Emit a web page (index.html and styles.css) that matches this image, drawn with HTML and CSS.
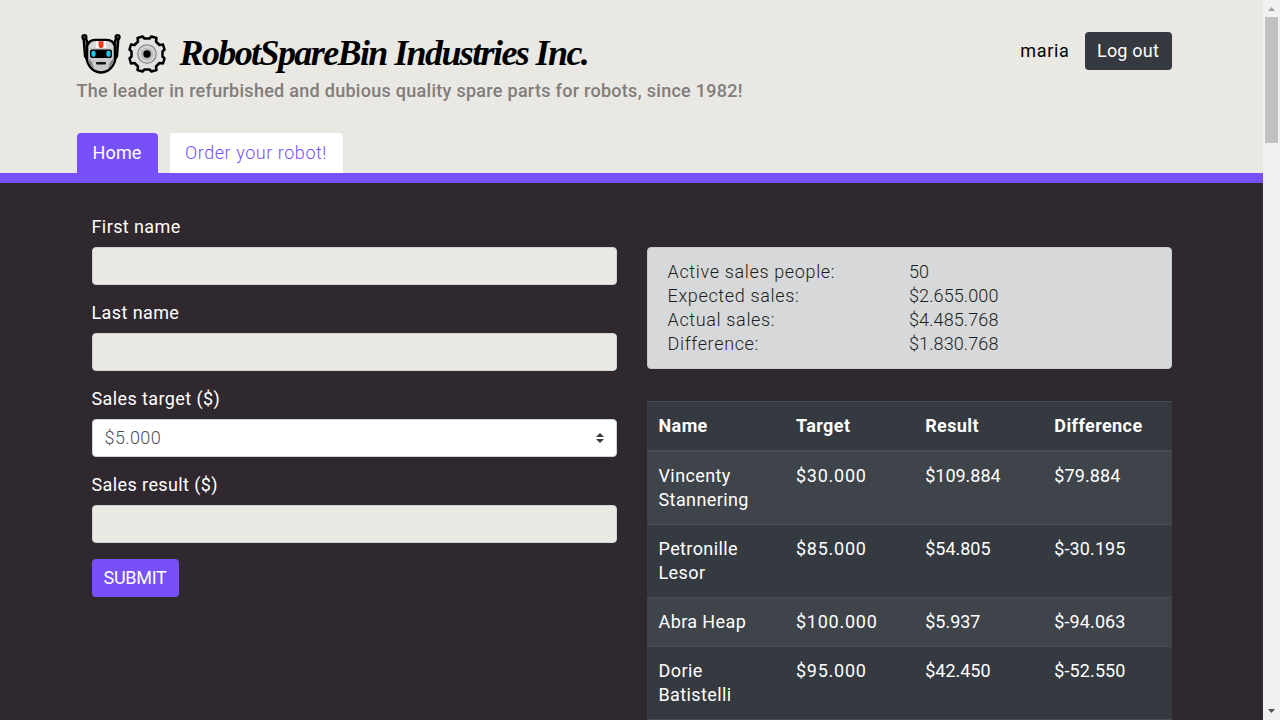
FILE: index.html
```html
<!DOCTYPE html>
<html lang="en">
<head>
<meta charset="utf-8">
<title>RobotSpareBin Industries Inc. - Intranet</title>
<link rel="stylesheet" href="styles.css">
</head>
<body>
<div class="window">
<div class="page">
  <header class="header">
    <div class="container">
      <div class="topline">
        <div class="brand">
          <div class="logo">
            <svg class="robot" width="40" height="40" viewBox="0 0 40 40">
              <path d="M2.6 4 4 22l2.5 4V8L4.5 4zM37.4 4 36 22l-2.5 4V8l2-4z" fill="#777" stroke="#000" stroke-width="2.4" stroke-linejoin="round"/>
              <circle cx="3.4" cy="3.2" r="2.1" fill="#444" stroke="#000" stroke-width="2"/>
              <circle cx="36.6" cy="3.2" r="2.1" fill="#444" stroke="#000" stroke-width="2"/>
              <path d="M6 12Q8 6 14 6h12q6 0 8 6v14q-1 6-7 10.500-7 4-14 0Q7 32 6 26z" fill="#c9cacb" stroke="#000" stroke-width="2.5"/>
              <path d="M7.200 24v3q1.500 5 6 8.500l-2-7zM32.800 24v3q-1.500 5-6 8.500l2-7z" fill="#858585"/>
              <path d="M8 14q1-6.800 6-6.800h12q5 0 6 6.800z" fill="#d8d8d8"/>
              <path d="M15 7.200h10V14H15z" fill="#fff"/>
              <path d="M17.500 7.200h5v4.800l-1.200 2h-2.600l-1.200-2z" fill="#f03a17"/>
              <rect x="9" y="15.500" width="22" height="8.500" rx="2" fill="#000"/>
              <rect x="10.400" y="16.800" width="4.200" height="6" rx="1.800" fill="#26c5ee"/>
              <rect x="25.400" y="16.800" width="4.200" height="6" rx="1.800" fill="#26c5ee"/>
              <rect x="15" y="28" width="10" height="2.500" rx="1" fill="#111"/>
            </svg>
            <svg class="gear" width="38" height="38" viewBox="-19 -19 38 38">
              <path d="M-2.500-15.500-4.500-17.500-9.500-16-9-12.500-12.500-9-16-9.500-17.500-4.500-15.500-2.500V2.500L-17.500 4.500-16 9.500-12.500 9-9 12.500-9.500 16-4.500 17.500-2.500 15.500H2.500L4.500 17.500 9.500 16 9 12.500 12.500 9 16 9.500 17.500 4.500 15.500 2.500V-2.500L17.500-4.500 16-9.500 12.500-9 9-12.500 9.500-16 4.500-17.500 2.500-15.500z" fill="#e2e2e2" stroke="#000" stroke-width="2.500" stroke-linejoin="round"/>
              <circle r="9.300" fill="#d2d2d2" stroke="#808080" stroke-width="1.100"/>
              <circle r="6" fill="#b8b8b8"/>
              <circle r="3.700" fill="#000"/>
            </svg>
            <span class="name">RobotSpareBin Industries Inc.</span>
          </div>
          <div class="tagline">The leader in refurbished and dubious quality spare parts for robots, since 1982!</div>
        </div>
        <div class="account">
          <span class="user">maria</span>
          <button class="btn dark">Log out</button>
        </div>
      </div>
      <nav class="tabs">
        <a class="tab active">Home</a>
        <a class="tab order">Order your robot!</a>
      </nav>
    </div>
  </header>
  <main class="container content">
    <form class="form">
      <div class="group"><label>First name</label><div class="input"></div></div>
      <div class="group"><label>Last name</label><div class="input"></div></div>
      <div class="group"><label>Sales target ($)</label>
        <div class="input select"><span>$5.000</span>
          <svg width="8" height="10" viewBox="0 0 8 10"><path d="M0 4l4-4 4 4zM0 6h8l-4 4z" fill="#343a40"/></svg>
        </div>
      </div>
      <div class="group"><label>Sales result ($)</label><div class="input"></div></div>
      <button class="btn submit" type="button">SUBMIT</button>
    </form>
    <section class="results">
      <div class="summary">
        <span class="term">Active sales people:</span><span>50</span>
        <span class="term">Expected sales:</span><span>$2.655.000</span>
        <span class="term">Actual sales:</span><span>$4.485.768</span>
        <span class="term">Difference:</span><span>$1.830.768</span>
      </div>
      <table class="table">
        <thead><tr><th class="first">Name</th><th>Target</th><th>Result</th><th>Difference</th></tr></thead>
        <tbody>
          <tr><td>Vincenty<br>Stannering</td><td class="target">$30.000</td><td class="result">$109.884</td><td class="diff">$79.884</td></tr>
          <tr><td>Petronille<br>Lesor</td><td class="target">$85.000</td><td class="result">$54.805</td><td class="diff">$-30.195</td></tr>
          <tr><td>Abra Heap</td><td class="target">$100.000</td><td class="result">$5.937</td><td class="diff">$-94.063</td></tr>
          <tr><td>Dorie<br>Batistelli</td><td class="target">$95.000</td><td class="result">$42.450</td><td class="diff">$-52.550</td></tr>
          <tr><td></td><td></td><td></td><td></td></tr>
        </tbody>
      </table>
    </section>
  </main>
</div>
<div class="scrollbar">
  <svg width="7" height="4" viewBox="0 0 7 4"><path d="M0 4h7L3.500 0z" fill="#a3a3a3"/></svg>
  <div class="thumb"></div>
  <svg class="down" width="7" height="4" viewBox="0 0 7 4"><path d="M0 0h7L3.500 4z" fill="#505050"/></svg>
</div>
</div>
</body>
</html>
```
FILE: styles.css
```css
* { box-sizing: border-box; }
body {
  margin: 0;
  font: 400 18px/24px Roboto, "Liberation Sans", sans-serif;
  letter-spacing: 0.4px;
  overflow: hidden;
}
.window { display: flex; height: 720px; overflow: hidden; }
.page { flex: 1; background: #2f282e; overflow: hidden; }
.header { height: 183px; background: #e9e8e3; border-bottom: 10px solid #7750fa; }
.container { width: 1140px; margin: 0 auto; padding: 0 15px; }
.header .container { height: 173px; display: flex; flex-direction: column; justify-content: space-between; }
.topline { display: flex; justify-content: space-between; padding: 32px 15px 0 0; }
.logo { display: flex; align-items: center; height: 43px; padding-left: 4px; }
.gear { margin-left: 7px; }
.name {
  margin-left: 14px;
  font: italic 700 36px/43px "Liberation Serif", serif;
  letter-spacing: -1.6px;
  color: #000;
  white-space: nowrap;
}
.tagline { margin-top: 4px; font-weight: 500; letter-spacing: 0.28px; color: #827d7a; white-space: nowrap; }
.account { display: flex; align-items: center; height: 38px; gap: 15px; }
.user { color: #000; letter-spacing: 0.7px; }
.btn {
  height: 38px;
  border: 0;
  border-radius: 4px;
  padding: 0;
  color: #fff;
  font: inherit;
  letter-spacing: 0.2px;
}
.dark { width: 87px; background: #343a40; }
.submit { width: 87px; background: #7750fa; letter-spacing: -0.3px; }
.tabs { display: flex; gap: 12px; }
.tab {
  height: 40px;
  line-height: 40px;
  width: 173px;
  text-align: center;
  border-radius: 4px 4px 0 0;
  background: #fff;
  color: #7750fa;
  font-weight: 300;
  letter-spacing: 0.55px;
}
.tab.active { width: 81px; background: #7750fa; color: #fff; font-weight: 400; letter-spacing: 0.2px; }
.content { display: flex; gap: 30px; padding: 32px 15px 0 30px; }
.form { width: 525px; color: #fff; }
.group { margin-bottom: 16px; }
.group label { display: block; margin-bottom: 8px; }
.input { height: 38px; border: 1px solid #ced4da; border-radius: 4px; background: #e9e8e3; }
.select {
  display: flex;
  align-items: center;
  justify-content: space-between;
  padding: 0 12px;
  background: #fff;
  color: #495057;
  font-weight: 300;
}
.results { width: 525px; flex: none; padding-top: 32px; }
.summary {
  display: grid;
  grid-template-columns: 1fr 1fr;
  padding: 12px 20px;
  border: 1px solid #c6c8ca;
  border-radius: 4px;
  background: #d6d8d9;
  color: #1b1e21;
  font-weight: 300;
  letter-spacing: 0.1px;
}
.term { letter-spacing: 0.65px; }
.table {
  width: 525px;
  margin-top: 32px;
  border-spacing: 0;
  table-layout: fixed;
  background: #343a40;
  color: #fff;
}
.first { width: 137.5px; }
.table th, .table td { padding: 12px; text-align: left; vertical-align: top; }
.table th { border-top: 1px solid #454d55; border-bottom: 2px solid #454d55; font-weight: 700; }
.table td { border-top: 1px solid #454d55; }
.table .target { letter-spacing: 0.75px; }
.table .result { letter-spacing: 0; }
.table .diff { letter-spacing: 0.1px; }
.table tbody tr:first-child td { border-top: 0; }
.table tbody tr:nth-child(odd) { background: #3e444a; }
.scrollbar {
  flex: none;
  width: 17px;
  display: flex;
  flex-direction: column;
  align-items: center;
  padding: 7px 0;
  background: #f1f1f1;
}
.scrollbar svg { flex: none; }
.thumb { width: 13px; height: 126px; margin-top: 6px; background: #c1c1c1; }
.down { margin-top: auto; }
```
